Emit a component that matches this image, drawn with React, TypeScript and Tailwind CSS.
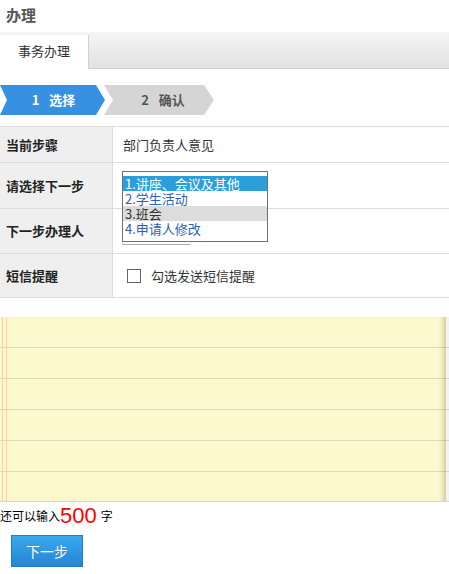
import React from 'react';

const font = { fontFamily: '"Noto Sans CJK SC", "Noto Sans", sans-serif' };

const options = [
  { label: '1.讲座、会议及其他', state: 'selected' },
  { label: '2.学生活动', state: 'normal' },
  { label: '3.班会', state: 'hover' },
  { label: '4.申请人修改', state: 'normal' },
];

function Row({ label, height, children }: { label: string; height: string; children?: React.ReactNode }) {
  return (
    <div className={`flex border-b border-[#dddddd] ${height}`}>
      <div className="flex w-[113px] shrink-0 items-center border-r border-[#dddddd] bg-[#efefef] pl-[6px] text-[13px] font-bold text-[#222]">
        {label}
      </div>
      <div className="relative flex flex-1 items-center pl-[10px] text-[13px] text-[#333]">{children}</div>
    </div>
  );
}

export default function App() {
  return (
    <div className="w-[449px] bg-white text-[#333]" style={font}>
      <div className="flex h-[32px] items-center pb-[2px] pl-[6px] text-[15px] font-bold text-[#555]">办理</div>

      <div className="flex h-[37px] border-b border-[#cfcfcf] bg-gradient-to-b from-[#f5f5f5] to-[#e2e2e2]">
        <div className="-mb-px mt-[3px] flex w-[89px] items-center justify-center border-r border-[#d0d0d0] bg-white pb-[2px] text-[13px] text-[#333]">
          事务办理
        </div>
      </div>

      <div className="mt-[16px] flex h-[30px]">
        <div className="flex w-[105px] items-center justify-center bg-[#3890e2] pl-[2px] text-[13px] font-bold text-white [clip-path:polygon(0_0,96px_0,105px_50%,96px_100%,0_100%,7px_50%)]">
          <span className="mr-[10px]">1</span>选择
        </div>
        <div className="-ml-px flex w-[110px] items-center justify-center bg-[#d5d5d5] pl-[8px] text-[13px] font-bold text-[#555] [clip-path:polygon(0_0,100px_0,110px_50%,100px_100%,0_100%,9px_50%)]">
          <span className="mr-[10px]">2</span>确认
        </div>
      </div>

      <div className="mt-[11px] border-t border-[#dddddd]">
        <Row label="当前步骤" height="h-[36px]">部门负责人意见</Row>
        <Row label="请选择下一步" height="h-[46px]">
          {/* open dropdown list, lies over the next row */}
          <div className="absolute left-[9px] top-[8px] z-10 w-[146px] border border-[#707070] bg-white pt-[4px] pb-[5px] text-[13px] leading-[15px]">
            {options.map((o) => (
              <div
                key={o.label}
                className={
                  o.state === 'selected'
                    ? 'h-[15px] bg-[#2a9fdc] pl-[2px] text-white'
                    : o.state === 'hover'
                      ? 'h-[15px] bg-[#dcdcdc] pl-[2px] text-[#333]'
                      : 'h-[15px] pl-[2px] text-[#3060b0]'
                }
              >
                {o.label}
              </div>
            ))}
          </div>
        </Row>
        <Row label="下一步办理人" height="h-[45px]">
          <div className="absolute left-[9px] top-[35px] h-px w-[68px] bg-[#aaaaaa]" />
        </Row>
        <Row label="短信提醒" height="h-[44px]">
          <div className="ml-[4px] h-[14px] w-[14px] border border-[#666] bg-white" />
          <span className="ml-[10px]">勾选发送短信提醒</span>
        </Row>
      </div>

      <div className="mt-[19px] flex h-[185px] border-b border-[#ddd8c0] bg-[#f3f3f3] [background-image:repeating-linear-gradient(to_bottom,transparent_0,transparent_30px,#d2d2d2_30px,#d2d2d2_31px)]">
        <div className="w-[446px] bg-[#fdf9cf] shadow-[inset_-5px_0_4px_-2px_rgba(120,110,60,0.3)] [background-image:linear-gradient(to_right,transparent_2px,#fdd0a6_2px,#fdd0a6_3px,transparent_3px,transparent_6px,#fdd0a6_6px,#fdd0a6_7px,transparent_7px),repeating-linear-gradient(to_bottom,transparent_0,transparent_30px,#ddd8bd_30px,#ddd8bd_31px)]" />
      </div>

      <div className="flex h-[28px] items-center text-[12px] text-black" style={{ fontFamily: '"Noto Sans CJK SC", sans-serif' }}>
        还可以输入
        <span className="text-[22px] leading-none text-[#ff0000]" style={{ fontFamily: '"Liberation Sans", Arial, sans-serif' }}>
          500
        </span>
        <span className="ml-[4px]">字</span>
      </div>

      <div className="mt-[5px] pl-[11px] pb-[7px]">
        <button className="h-[32px] w-[72px] border border-[#1f7dcb] bg-gradient-to-b from-[#3aa9ee] to-[#2385d6] text-[14px] text-white">
          下一步
        </button>
      </div>
    </div>
  );
}
